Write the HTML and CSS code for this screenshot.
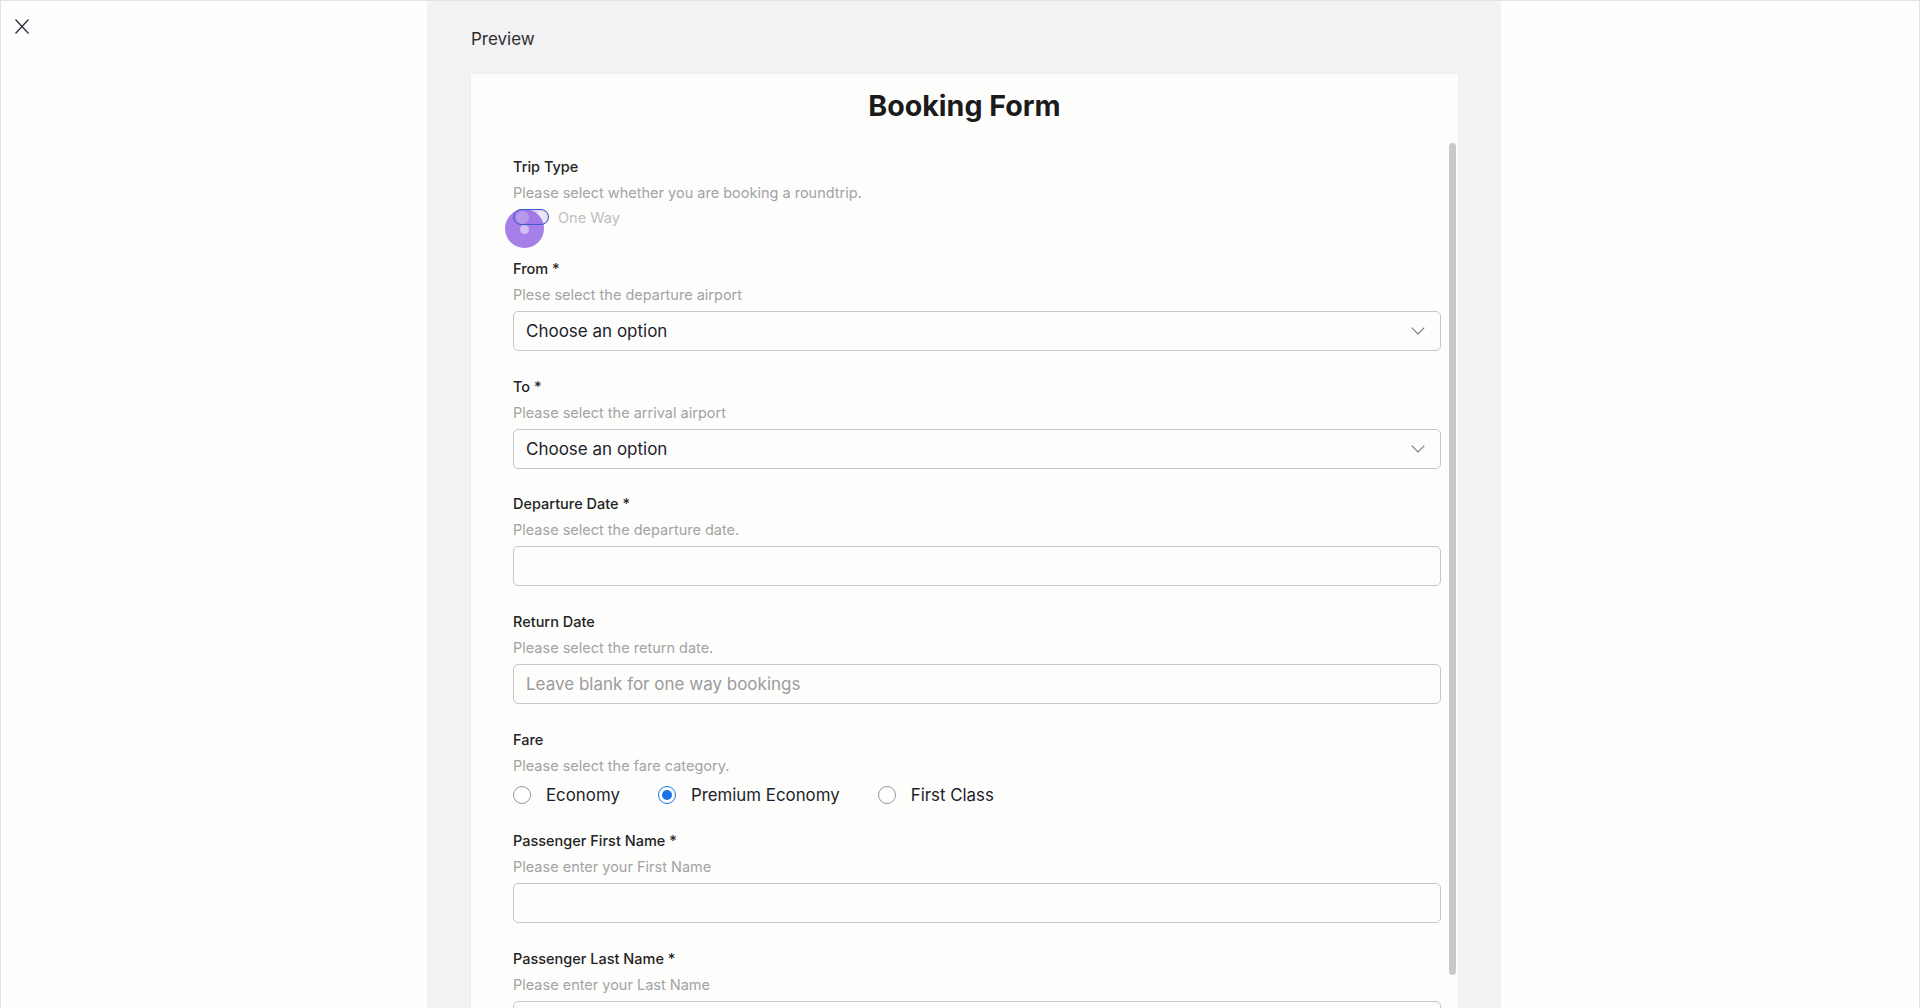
FILE: index.html
```html
<!DOCTYPE html>
<html lang="en">
<head>
<meta charset="utf-8">
<title>Preview - Booking Form</title>
<link rel="stylesheet" href="styles.css">
</head>
<body>
<div class="modal">
  <div class="side-left">
    <button class="close" aria-label="Close">
      <svg width="14" height="15" viewBox="0 0 14 15"><path d="M0.5 0.5 L13.5 14.5 M13.5 0.5 L0.5 14.5" stroke="#2b303b" stroke-width="1.3" fill="none"/></svg>
    </button>
  </div>
  <div class="panel">
    <div class="preview-label">Preview</div>
    <div class="card">
      <div class="card-head"><h1 class="title">Booking Form</h1></div>
      <div class="card-body">
        <form class="form">
          <div class="field field-toggle">
            <div class="label">Trip Type</div>
            <div class="helper helper-tight">Please select whether you are booking a roundtrip.</div>
            <div class="toggle-row">
              <span class="toggle">
                <span class="track"></span>
                <span class="knob-right"></span>
                <span class="ripple"></span>
                <span class="knob-left"></span>
                <span class="outline"></span>
                <span class="ripple-dot"></span>
              </span>
              <span class="toggle-text">One Way</span>
            </div>
          </div>

          <div class="field">
            <div class="label">From *</div>
            <div class="helper">Plese select the departure airport</div>
            <div class="input select">
              <span>Choose an option</span>
              <svg class="chev" width="14" height="8" viewBox="0 0 14 8"><path d="M0.7 0.7 L7 7 L13.3 0.7" stroke="#7a7a7a" stroke-width="1.1" fill="none"/></svg>
            </div>
          </div>

          <div class="field field-snug">
            <div class="label">To *</div>
            <div class="helper">Please select the arrival airport</div>
            <div class="input select">
              <span>Choose an option</span>
              <svg class="chev" width="14" height="8" viewBox="0 0 14 8"><path d="M0.7 0.7 L7 7 L13.3 0.7" stroke="#7a7a7a" stroke-width="1.1" fill="none"/></svg>
            </div>
          </div>

          <div class="field">
            <div class="label">Departure Date *</div>
            <div class="helper">Please select the departure date.</div>
            <div class="input"></div>
          </div>

          <div class="field">
            <div class="label">Return Date</div>
            <div class="helper">Please select the return date.</div>
            <div class="input"><span class="placeholder">Leave blank for one way bookings</span></div>
          </div>

          <div class="field">
            <div class="label">Fare</div>
            <div class="helper helper-fare">Please select the fare category.</div>
            <div class="radios">
              <span class="option"><span class="radio"></span><span class="opt-text">Economy</span></span>
              <span class="option"><span class="radio radio-on"><span class="dot"></span></span><span class="opt-text">Premium Economy</span></span>
              <span class="option"><span class="radio"></span><span class="opt-text">First Class</span></span>
            </div>
          </div>

          <div class="field">
            <div class="label">Passenger First Name *</div>
            <div class="helper">Please enter your First Name</div>
            <div class="input"></div>
          </div>

          <div class="field">
            <div class="label">Passenger Last Name *</div>
            <div class="helper">Please enter your Last Name</div>
            <div class="input"></div>
          </div>
        </form>
        <div class="scroll-track"><div class="thumb"></div></div>
      </div>
    </div>
  </div>
  <div class="side-right"></div>
</div>
</body>
</html>
```

FILE: styles.css
```css
* { box-sizing: border-box; }
html, body { margin: 0; padding: 0; }
body {
  font-family: Inter, "Noto Sans", "Liberation Sans", sans-serif;
  background: #fefefe;
  color: #1f1f1f;
  overflow: hidden;
}
.modal {
  display: flex;
  height: 100vh;
  border: 1px solid #e3e3e5;
  border-bottom: none;
  overflow: hidden;
}
.side-left {
  width: 426px;
  flex: none;
  padding: 18px 0 0 14px;
  background: #fefefe;
}
.close {
  display: block;
  border: none;
  background: none;
  padding: 0;
  margin: 0;
  width: 14px;
  height: 15px;
  cursor: pointer;
}
.close svg { display: block; }
.panel {
  width: 1074px;
  flex: none;
  background: #f2f2f4;
  padding: 28px 43px 0 44px;
  display: flex;
  flex-direction: column;
}
.preview-label {
  font-size: 17px;
  line-height: 20px;
  color: #2e2e2e;
  margin-bottom: 25px;
}
.card {
  flex: 1;
  background: #fdfdfc;
  box-shadow: 0 0 1px rgba(0,0,0,0.06);
  display: flex;
  flex-direction: column;
}
.card-head {
  padding: 15px 0 17px;
  text-align: center;
}
.title {
  margin: 0;
  font-size: 28.6px;
  line-height: 34px;
  font-weight: 700;
  color: #1b1b1b;
}
.card-body {
  display: flex;
  flex: 1;
}
.form {
  flex: 1;
  padding: 17px 0 0 42px;
  margin: 0;
}
.field { margin-bottom: 26px; }
.field-snug { margin-bottom: 25px; }
.field-toggle { margin-bottom: 32px; }
.label {
  font-size: 14.5px;
  line-height: 20px;
  font-weight: 500;
  color: #242424;
  margin-bottom: 6px;
}
.helper {
  font-size: 14.5px;
  line-height: 20px;
  color: #a3a3a3;
  margin-bottom: 6px;
}
.helper-tight { margin-bottom: 4px; }
.helper-fare { margin-bottom: 9px; }
.input {
  height: 40px;
  border: 1px solid #c6c6c8;
  border-radius: 5px;
  padding: 0 14px 0 12px;
  display: flex;
  align-items: center;
  font-size: 17px;
  color: #1d1d2b;
  background: #fdfdfc;
}
.select { justify-content: space-between; }
.chev { display: block; margin-right: 1px; }
.placeholder { color: #9b9b9b; }

.toggle-row {
  display: flex;
  align-items: center;
  height: 20px;
}
.toggle {
  position: relative;
  width: 36px;
  height: 16px;
  flex: none;
}
.track {
  position: absolute;
  inset: 0;
  border-radius: 8px;
  background: #d9d1ef;
}
.knob-right {
  position: absolute;
  right: 2px;
  top: 2px;
  width: 12px;
  height: 12px;
  border-radius: 50%;
  background: #ebe6f6;
}
.ripple {
  position: absolute;
  left: -8.5px;
  top: 0;
  width: 39px;
  height: 39px;
  border-radius: 50%;
  background: rgba(150,104,228,0.85);
}
.knob-left {
  position: absolute;
  left: 3px;
  top: 1.5px;
  width: 13px;
  height: 13px;
  border-radius: 50%;
  background: rgba(255,255,255,0.25);
}
.outline {
  position: absolute;
  inset: 0;
  border: 1.5px solid #3e5ccc;
  border-radius: 8px;
}
.ripple-dot {
  position: absolute;
  left: 6.5px;
  top: 15.5px;
  width: 9px;
  height: 9px;
  border-radius: 50%;
  background: rgba(255,255,255,0.5);
}
.toggle-text {
  margin-left: 9px;
  font-size: 14.5px;
  color: #bdbdbd;
}

.radios {
  display: flex;
  align-items: center;
  height: 20px;
}
.option {
  display: flex;
  align-items: center;
  margin-right: 38px;
}
.radio {
  width: 18px;
  height: 18px;
  border-radius: 50%;
  border: 1px solid #9a9a9a;
  background: #fff;
  flex: none;
  display: flex;
  align-items: center;
  justify-content: center;
}
.radio-on { border: 1.5px solid #1a73e8; }
.dot {
  width: 10px;
  height: 10px;
  border-radius: 50%;
  background: #1a73e8;
}
.opt-text {
  margin-left: 15px;
  font-size: 16.85px;
  color: #1d1d2b;
}

.scroll-track {
  width: 7px;
  flex: none;
  margin: 0 2px 0 8px;
}
.thumb {
  margin-top: 3px;
  height: 832px;
  border-radius: 4px;
  background: #c9c9c9;
}
.side-right {
  flex: 1;
  background: #fefefe;
}
```
